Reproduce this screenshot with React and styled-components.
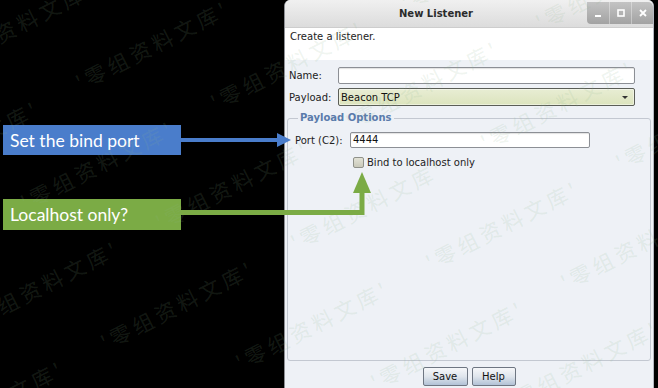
import styled, { createGlobalStyle } from "styled-components"

const GlobalStyle = createGlobalStyle`
  html, body {
    margin: 0;
    padding: 0;
    background: #000;
  }
  * {
    box-sizing: border-box;
  }
`

const Screen = styled.div`
  position: relative;
  width: 658px;
  height: 388px;
  overflow: hidden;
  background: #000;
  display: flex;
  font-family: "DejaVu Sans", "Noto Sans", sans-serif;
`

const Notes = styled.div`
  width: 284px;
  flex-shrink: 0;
  padding: 125px 0 0 3px;
  display: flex;
  flex-direction: column;
  gap: 44px;
`

const Note = styled.div`
  width: 178px;
  height: ${p => p.$h}px;
  background: ${p => p.$color};
  color: #fff;
  font-family: Lato, "Open Sans", sans-serif;
  font-size: 17.5px;
  display: flex;
  align-items: center;
  padding-left: 7px;
`

const Dialog = styled.div`
  width: 370px;
  flex-shrink: 0;
  height: 388px;
  display: flex;
  flex-direction: column;
  background: #eef1f6;
  border-left: 1px solid #8d8f94;
  border-right: 1px solid #b4b8c0;
  border-radius: 6px 6px 0 0;
  overflow: hidden;
`

const TitleBar = styled.div`
  height: 28px;
  display: flex;
  background: linear-gradient(#f0f0f0, #dcdcdc);
  border-bottom: 1px solid #cdcdcd;
`

const Title = styled.div`
  flex: 1;
  text-align: center;
  font-weight: bold;
  font-size: 10px;
  line-height: 28px;
  color: #2b2b2b;
`

const WinButtons = styled.div`
  align-self: flex-start;
  margin-top: 2px;
  display: flex;
  height: 22px;
  border-radius: 0 5px 0 4px;
  overflow: hidden;
  background: linear-gradient(#c3c3c3, #a2a2a2);
`

const WinButton = styled.div`
  width: 22px;
  height: 22px;
  display: flex;
  align-items: center;
  justify-content: center;
  & + & {
    border-left: 1px solid rgba(255, 255, 255, 0.35);
  }
`

const Header = styled.div`
  height: 32px;
  background: #fff;
  padding: 3px 5px;
  font-size: 10px;
  line-height: 12px;
  color: #222;
`

const Form = styled.div`
  display: grid;
  grid-template-columns: 49px 297px;
  row-gap: 4px;
  align-items: center;
  padding: 7px 0 0 4px;
  font-size: 10px;
  color: #222;
`

const TextBox = styled.div`
  height: ${p => p.$h}px;
  background: #fff;
  border: 1px solid #8c8f95;
  border-radius: 2px;
  box-shadow: inset 0 1px 1px rgba(0, 0, 0, 0.12);
  font-size: 10px;
  line-height: ${p => p.$h - 2}px;
  padding-left: 2px;
  color: #111;
`

const Combo = styled.div`
  height: 18px;
  display: flex;
  align-items: center;
  justify-content: space-between;
  padding: 0 6px 0 2px;
  background: linear-gradient(#e8edd4, #dce4bd);
  border: 1px solid #5b5e57;
  border-radius: 2px;
  box-shadow: inset 0 0 0 1px rgba(255, 255, 255, 0.45);
  color: #111;
`

const DownArrow = styled.span`
  width: 0;
  height: 0;
  border-left: 3px solid transparent;
  border-right: 3px solid transparent;
  border-top: 3px solid #333;
`

const Group = styled.fieldset`
  flex: 1;
  margin: 6px 2px 0 2px;
  padding: 8px 0 0 7px;
  border: 1px solid #c3c8d1;
  border-radius: 3px;
  min-width: 0;
`

const Legend = styled.legend`
  margin-left: 3px;
  padding: 0 2px;
  font-size: 10px;
  line-height: 12px;
  font-weight: bold;
  color: #5a7bab;
`

const PortRow = styled.div`
  display: grid;
  grid-template-columns: 55px 240px;
  align-items: center;
  font-size: 10px;
  color: #222;
`

const CheckRow = styled.div`
  display: flex;
  align-items: center;
  gap: 3px;
  margin-top: 9px;
  padding-left: 58px;
  font-size: 10px;
  color: #222;
`

const CheckBox = styled.span`
  width: 11px;
  height: 11px;
  border: 1px solid #8f918a;
  border-radius: 2px;
  background: linear-gradient(#e2e2d6, #c9c9ba);
`

const ButtonRow = styled.div`
  height: 27px;
  display: flex;
  justify-content: center;
  gap: 4px;
  padding-top: 6px;
`

const Button = styled.div`
  width: ${p => p.$w}px;
  height: 19px;
  border: 1px solid #6e7682;
  border-radius: 2px;
  background: linear-gradient(#f6f7f9, #dfe5ec 50%, #b2c2d6);
  font-size: 10px;
  line-height: 17px;
  text-align: center;
  color: #111;
`

const RightEdge = styled.div`
  flex: 1;
  background: #000;
`

const Overlay = styled.svg`
  position: absolute;
  left: 0;
  top: 0;
  pointer-events: none;
`

const Marks = styled.div`
  position: absolute;
  inset: 0;
  pointer-events: none;
`

const Mark = styled.span`
  position: absolute;
  white-space: nowrap;
  font-family: "Noto Sans CJK SC", sans-serif;
  font-size: 21px;
  line-height: 22px;
  letter-spacing: 4px;
  color: rgba(140, 180, 140, 0.15);
  transform: rotate(-27deg);
  transform-origin: 0 100%;
`

const marks = []
for (let i = -6; i <= 6; i++) {
  for (let j = -2; j <= 3; j++) {
    const x = 82 + i * 135 + j * 80
    const y = 93 + i * 20 + j * 140
    if (x > -170 && x < 670 && y > -10 && y < 470) marks.push({ x, y })
  }
}

export default function App() {
  return (
    <>
      <GlobalStyle />
      <Screen>
        <Notes>
          <Note $color="#4a7dcb" $h={30}>Set the bind port</Note>
          <Note $color="#7bab45" $h={31}>Localhost only?</Note>
        </Notes>
        <Dialog>
          <TitleBar>
            <Title>New Listener</Title>
            <WinButtons>
              <WinButton>
                <svg width="8" height="8" viewBox="0 0 8 8"><rect x="1" y="6" width="6" height="2" fill="#fff" /></svg>
              </WinButton>
              <WinButton>
                <svg width="8" height="8" viewBox="0 0 8 8"><rect x="1" y="1" width="6" height="6" fill="none" stroke="#fff" strokeWidth="1.6" /></svg>
              </WinButton>
              <WinButton>
                <svg width="8" height="8" viewBox="0 0 8 8"><path d="M1 1L7 7M7 1L1 7" stroke="#fff" strokeWidth="1.8" /></svg>
              </WinButton>
            </WinButtons>
          </TitleBar>
          <Header>Create a listener.</Header>
          <Form>
            <span>Name:</span>
            <TextBox $h={17} />
            <span>Payload:</span>
            <Combo>
              <span>Beacon TCP</span>
              <DownArrow />
            </Combo>
          </Form>
          <Group>
            <Legend>Payload Options</Legend>
            <PortRow>
              <span>Port (C2):</span>
              <TextBox $h={16}>4444</TextBox>
            </PortRow>
            <CheckRow>
              <CheckBox />
              <span>Bind to localhost only</span>
            </CheckRow>
          </Group>
          <ButtonRow>
            <Button $w={45}>Save</Button>
            <Button $w={44}>Help</Button>
          </ButtonRow>
        </Dialog>
        <RightEdge />
        <Marks>
          {marks.map((m, k) => (
            <Mark key={k} style={{ left: m.x, top: m.y - 22 }}>'零组资料文库'</Mark>
          ))}
        </Marks>
        <Overlay width="658" height="388" viewBox="0 0 658 388">
          <line x1="181" y1="140" x2="279" y2="140" stroke="#4a7dcb" strokeWidth="4" />
          <polygon points="277,133 291,140 277,147" fill="#4a7dcb" />
          <polyline points="181,212.5 362,212.5 362,190" fill="none" stroke="#7bab45" strokeWidth="5" />
          <polygon points="353,193 362,172 371,193" fill="#7bab45" />
        </Overlay>
      </Screen>
    </>
  )
}
